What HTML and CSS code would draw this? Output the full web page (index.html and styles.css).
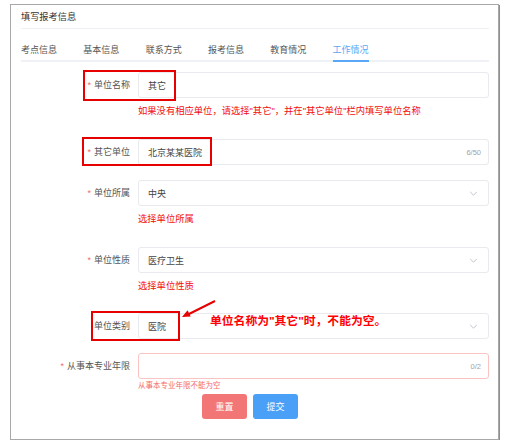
FILE: index.html
```html
<!DOCTYPE html>
<html lang="zh-CN">
<head>
<meta charset="utf-8">
<title>填写报考信息</title>
<link rel="stylesheet" href="styles.css">
</head>
<body>
<div class="frame">
  <div class="header">填写报考信息</div>
  <div class="tabs">
    <div class="tab">考点信息</div>
    <div class="tab">基本信息</div>
    <div class="tab">联系方式</div>
    <div class="tab">报考信息</div>
    <div class="tab">教育情况</div>
    <div class="tab active">工作情况</div>
  </div>
  <div class="form">
    <div class="item item-1">
      <div class="label"><span class="star">*</span>单位名称</div>
      <div class="control">
        <div class="input"><span class="value">其它</span></div>
        <div class="help">如果没有相应单位，请选择"其它"，并在"其它单位"栏内填写单位名称</div>
      </div>
      <div class="mark mark-1"></div>
    </div>
    <div class="item item-2">
      <div class="label"><span class="star">*</span>其它单位</div>
      <div class="control">
        <div class="input"><span class="value">北京某某医院</span><span class="count">6/50</span></div>
      </div>
      <div class="mark mark-2"></div>
    </div>
    <div class="item item-3">
      <div class="label"><span class="star">*</span>单位所属</div>
      <div class="control">
        <div class="input"><span class="value">中央</span><svg class="chev" viewBox="0 0 10 6" width="9" height="5"><polyline points="1,1 5,5 9,1" fill="none" stroke="#c0c4cc" stroke-width="1.2"/></svg></div>
        <div class="help">选择单位所属</div>
      </div>
    </div>
    <div class="item item-4">
      <div class="label"><span class="star">*</span>单位性质</div>
      <div class="control">
        <div class="input"><span class="value">医疗卫生</span><svg class="chev" viewBox="0 0 10 6" width="9" height="5"><polyline points="1,1 5,5 9,1" fill="none" stroke="#c0c4cc" stroke-width="1.2"/></svg></div>
        <div class="help">选择单位性质</div>
      </div>
    </div>
    <div class="item item-5">
      <div class="label">单位类别</div>
      <div class="control">
        <div class="input"><span class="value">医院</span><svg class="chev" viewBox="0 0 10 6" width="9" height="5"><polyline points="1,1 5,5 9,1" fill="none" stroke="#c0c4cc" stroke-width="1.2"/></svg></div>
      </div>
      <div class="mark mark-5"></div>
      <svg class="arrow" viewBox="0 0 40 24" width="40" height="24">
        <line x1="35" y1="4" x2="8" y2="17.5" stroke="#e60000" stroke-width="2"/>
        <polygon points="2,20 10.7,19.6 7.6,13.3" fill="#e60000"/>
      </svg>
      <div class="note">单位名称为"其它"时，不能为空。</div>
    </div>
    <div class="item item-6">
      <div class="label"><span class="star">*</span>从事本专业年限</div>
      <div class="control">
        <div class="input error"><span class="value"></span><span class="count">0/2</span></div>
        <div class="err">从事本专业年限不能为空</div>
      </div>
    </div>
    <div class="actions">
      <button class="btn btn-reset">重置</button>
      <button class="btn btn-submit">提交</button>
    </div>
  </div>
</div>
</body>
</html>
```
FILE: styles.css
```css
* { box-sizing: border-box; }
html, body { margin: 0; padding: 0; background: #fff; }
body {
  font-family: "Liberation Sans", "Noto Sans CJK SC", sans-serif;
  color: #606266;
}
.frame {
  margin: 4px 0 0 10px;
  width: 489px;
  height: 436px;
  border: 1px solid #a8a8a8;
  box-shadow: 1px 1px 0 #8f8f8f;
  padding: 0 9px 0 10px;
  background: #fff;
}
.header {
  height: 24px;
  line-height: 24px;
  font-size: 9.2px;
  color: #333;
  border-bottom: 1px solid #eef0f3;
}
.tabs {
  display: flex;
  gap: 26.3px;
  border-bottom: 2px solid #eef2f7;
}
.tab {
  font-size: 9px;
  line-height: 12px;
  padding: 15px 0 4px;
  color: #555;
  margin-bottom: -2px;
  border-bottom: 2px solid transparent;
}
.tab.active {
  color: #5aa8f5;
  border-bottom-color: #5aa8f5;
}
.form { padding-top: 10px; }
.item {
  position: relative;
  display: grid;
  grid-template-columns: 109px 1fr;
  column-gap: 8px;
}
.label {
  height: 26px;
  line-height: 26px;
  text-align: right;
  font-size: 9px;
  color: #555;
}
.star { color: #f56c6c; margin-right: 3px; }
.input {
  height: 26px;
  border: 1px solid #e8eaef;
  border-radius: 3px;
  display: flex;
  align-items: center;
  padding: 0 7px 0 9px;
  font-size: 9px;
  color: #444;
}
.input.error { border-color: #fbc4c4; }
.value { flex: 1; }
.count { font-size: 7.5px; color: #a0a3a8; }
.chev { margin-right: 3px; }
.help {
  margin-top: 6px;
  line-height: 14px;
  font-size: 9.3px;
  color: #f20d0d;
}
.err {
  margin-top: 2px;
  line-height: 10px;
  font-size: 7.5px;
  color: #f56c6c;
}
.item-1 { margin-bottom: 21px; }
.item-2 { margin-bottom: 15px; }
.item-3 { margin-bottom: 21px; }
.item-4 { margin-bottom: 20px; }
.item-5 { margin-bottom: 14px; }
.item-6 { margin-bottom: 3px; }
.mark {
  position: absolute;
  border: 2px solid #e60000;
}
.mark-1 { left: 62px; top: -2px; width: 93px; height: 31px; }
.mark-2 { left: 61px; top: -2px; width: 130px; height: 29px; }
.mark-5 { left: 70px; top: -2px; width: 89px; height: 30px; }
.arrow { position: absolute; left: 159px; top: -16px; }
.note {
  position: absolute;
  left: 189px;
  top: 1px;
  line-height: 14px;
  font-size: 11.8px;
  font-weight: bold;
  color: #f00;
  white-space: nowrap;
}
.actions {
  display: flex;
  gap: 6px;
  padding-left: 181px;
}
.btn {
  width: 45px;
  height: 25px;
  border: none;
  border-radius: 3px;
  color: #fff;
  font-family: inherit;
  font-size: 9px;
  padding: 0;
}
.btn-reset { background: #f37676; }
.btn-submit { background: #4aa0f7; }
```
